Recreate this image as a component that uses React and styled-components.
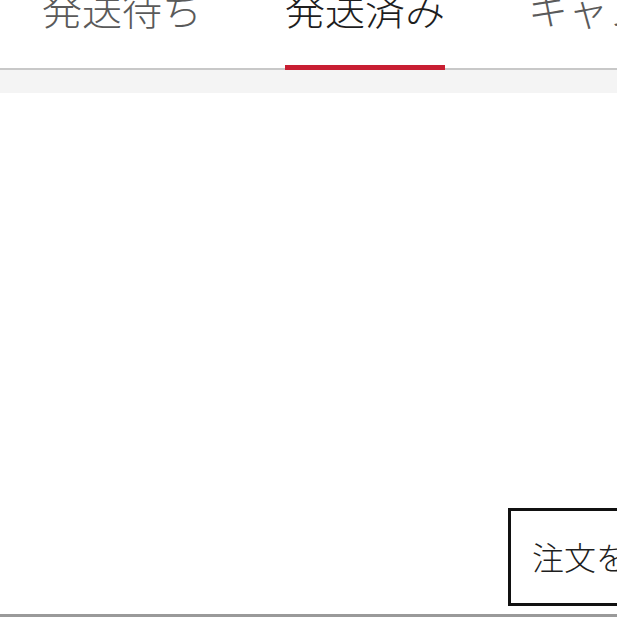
import React from "react";
import styled, { createGlobalStyle } from "styled-components";

const Global = createGlobalStyle`
  html, body { margin: 0; padding: 0; background: #fff; overflow: hidden; }
  body { font-family: "Noto Sans CJK JP", "Noto Sans", sans-serif; }
`;

const Page = styled.div`
  width: 617px;
  height: 617px;
  display: flex;
  flex-direction: column;
  overflow: hidden;
  position: relative;
`;

const TabBar = styled.div`
  flex: none;
  height: 70px;
  border-bottom: 2px solid #c8c8c8;
  box-sizing: border-box;
  display: flex;
  align-items: flex-end;
  padding-left: 42px;
  gap: 83px;
  white-space: nowrap;
  position: relative;
`;

const Tab = styled.div`
  position: relative;
  flex: none;
  font-size: 40px;
  line-height: 40px;
  font-weight: 300;
  color: ${(p) => (p.$active ? "#1e1e1e" : "#5a5a5a")};
  padding-bottom: 40px;
  &::after {
    content: "";
    display: ${(p) => (p.$active ? "block" : "none")};
    position: absolute;
    left: 0;
    right: 0;
    bottom: -2px;
    height: 5px;
    background: #c81e32;
  }
`;

const Band = styled.div`
  flex: none;
  height: 23px;
  background: #f4f4f4;
`;

const Content = styled.div`
  flex: 1;
  display: flex;
  justify-content: flex-start;
  align-items: flex-end;
  padding-left: 508px;
  padding-bottom: 8px;
  border-bottom: 3px solid #9a9a9a;
`;

const OrderButton = styled.button`
  flex: none;
  width: 200px;
  height: 98px;
  box-sizing: border-box;
  border: 3px solid #111;
  background: #fff;
  padding: 0 0 2px 21px;
  display: flex;
  align-items: center;
  font-family: "Noto Sans CJK JP", "Noto Sans", sans-serif;
  font-size: 32px;
  font-weight: 300;
  color: #1e1e1e;
  white-space: nowrap;
`;

export default function App() {
  return (
    <Page>
      <Global />
      <TabBar>
        <Tab>発送待ち</Tab>
        <Tab $active>発送済み</Tab>
        <Tab>キャンセル</Tab>
      </TabBar>
      <Band />
      <Content>
        <OrderButton>注文を再購入</OrderButton>
      </Content>
    </Page>
  );
}
